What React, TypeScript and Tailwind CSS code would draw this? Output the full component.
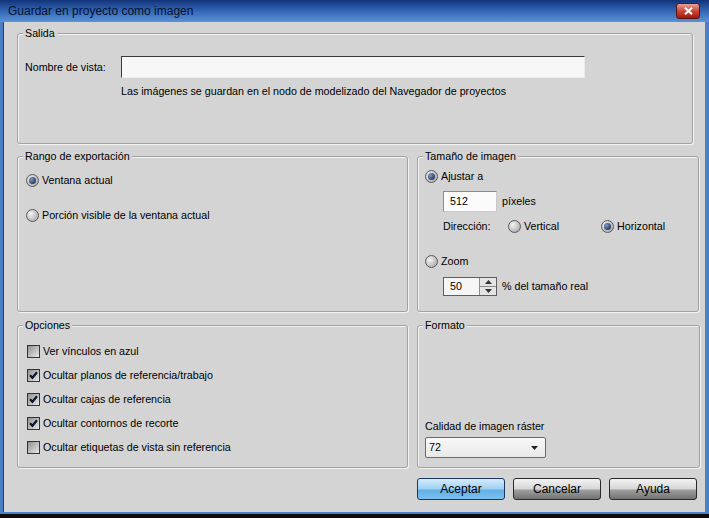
import React from 'react';

// Radio button in the old Windows classic/Vista-basic look
const Radio = ({ checked }: { checked?: boolean }) => (
  <span className="flex h-[13px] w-[13px] shrink-0 items-center justify-center rounded-full border border-[#5a5a5a] bg-[radial-gradient(circle_at_35%_35%,#f4f4f4,#9c9c9c)]">
    {checked && (
      <span className="h-[7px] w-[7px] rounded-full bg-[radial-gradient(circle_at_35%_35%,#7f98cc,#0a1738)]" />
    )}
  </span>
);

const Check = ({ checked }: { checked?: boolean }) => (
  <span className="flex h-[13px] w-[13px] shrink-0 items-center justify-center border border-[#343434] bg-[linear-gradient(135deg,#8f8f8f,#e9e9e9)]">
    {checked && (
      <svg width="9" height="9" viewBox="0 0 9 9">
        <path d="M1 4.2 L3.4 6.8 L8 1.2" stroke="#0b1530" strokeWidth="2.2" fill="none" />
      </svg>
    )}
  </span>
);

const Group = ({ title, className, children }: { title: string; className: string; children?: React.ReactNode }) => (
  <div
    className={`relative shrink-0 rounded-[3px] border border-[#a2a2a2] shadow-[inset_1px_1px_0_#f3f3f3,1px_1px_0_#f3f3f3] ${className}`}
  >
    <span className="absolute -top-[8px] left-[5px] bg-[#d4d4d4] px-[2px] leading-[14px]">{title}</span>
    {children}
  </div>
);

const Button = ({ label, primary }: { label: string; primary?: boolean }) => (
  <button
    className={`flex h-[22px] w-[88px] items-center justify-center rounded-[3px] border text-[12px] ${
      primary
        ? 'border-[#1b355f] bg-[linear-gradient(#d4ecfc,#9fd0f3_50%,#62aee6_55%,#7cc0ee)]'
        : 'border-[#2a2a2a] bg-[linear-gradient(#f3f3f3,#d6d6d6_50%,#9f9f9f_55%,#727272)]'
    }`}
  >
    {label}
  </button>
);

export default function App() {
  return (
    <div className="h-[518px] w-[709px] overflow-hidden bg-[#0c0c0c] font-['Liberation_Sans',Arial,sans-serif] text-[10.7px] leading-[13px] text-black">
      <div className="flex h-[514px] flex-col bg-[#4a7fc6]">
        {/* title bar */}
        <div className="flex h-[22px] shrink-0 items-center justify-between bg-[linear-gradient(#12337a,#2f62b0_45%,#5a93d8)] pl-[8px] pr-[9px]">
          <span className="text-[12px] leading-[16px] text-[#06122e]">Guardar en proyecto como imagen</span>
          <span className="flex h-[16px] w-[24px] items-center justify-center rounded-[3px] border border-[#5a1410] bg-[linear-gradient(#e7a194,#c9473a_50%,#a3180f)]">
            <svg width="9" height="8" viewBox="0 0 9 8">
              <path d="M1 0.8 L8 7.2 M8 0.8 L1 7.2" stroke="#fff" strokeWidth="2" />
            </svg>
          </span>
        </div>

        {/* frame */}
        <div className="flex flex-1 flex-col pb-[2px] pl-[3px] pr-[4px]">
          <div className="flex flex-1 flex-col border-l border-[#1d3d75] bg-[#d4d4d4] pl-[13px] pt-[11px]">
            <Group title="Salida" className="h-[111px] w-[676px] pl-[7px] pt-[22px]">
              <div className="flex items-center">
                <span className="w-[96px]">Nombre de vista:</span>
                <div className="h-[22px] w-[464px] border border-b-[#ececec] border-l-[#3a3a3a] border-r-[#ececec] border-t-[#3a3a3a] bg-[#f7f7f7]" />
              </div>
              <div className="ml-[96px] mt-[7px]">
                Las imágenes se guardan en el nodo de modelizado del Navegador de proyectos
              </div>
            </Group>

            <div className="mt-[12px] flex gap-[9px]">
              <Group title="Rango de exportación" className="h-[156px] w-[391px] pl-[8px] pt-[17px]">
                <div className="flex flex-col gap-[22px]">
                  <label className="flex items-center gap-[3px]">
                    <Radio checked />
                    <span>Ventana actual</span>
                  </label>
                  <label className="flex items-center gap-[3px]">
                    <Radio />
                    <span>Porción visible de la ventana actual</span>
                  </label>
                </div>
              </Group>

              <Group title="Tamaño de imagen" className="h-[156px] w-[282px] pl-[7px] pt-[13px]">
                <label className="flex items-center gap-[3px]">
                  <Radio checked />
                  <span>Ajustar a</span>
                </label>
                <div className="ml-[18px] mt-[8px] flex items-center gap-[5px]">
                  <div className="flex h-[21px] w-[54px] items-center border border-[#c9c9c9] border-l-[#8a8a8a] border-t-[#8a8a8a] bg-[#fbfbfb] pl-[6px]">
                    512
                  </div>
                  <span>píxeles</span>
                </div>
                <div className="ml-[18px] mt-[8px] flex items-center">
                  <span className="w-[65px]">Dirección:</span>
                  <label className="flex w-[93px] items-center gap-[3px]">
                    <Radio />
                    <span>Vertical</span>
                  </label>
                  <label className="flex items-center gap-[3px]">
                    <Radio checked />
                    <span>Horizontal</span>
                  </label>
                </div>
                <label className="mt-[22px] flex items-center gap-[3px]">
                  <Radio />
                  <span>Zoom</span>
                </label>
                <div className="ml-[18px] mt-[9px] flex items-center gap-[5px]">
                  <div className="flex h-[19px] w-[54px] border border-[#5e5e5e] bg-[#f6f6f6]">
                    <span className="flex flex-1 items-center pl-[6px]">50</span>
                    <div className="flex w-[17px] flex-col border-l border-[#8a8a8a] bg-[#e4e4e4]">
                      <span className="flex flex-1 items-center justify-center border-b border-[#8a8a8a]">
                        <svg width="7" height="4" viewBox="0 0 7 4">
                          <path d="M0 4 L3.5 0 L7 4 Z" fill="#333" />
                        </svg>
                      </span>
                      <span className="flex flex-1 items-center justify-center">
                        <svg width="7" height="4" viewBox="0 0 7 4">
                          <path d="M0 0 L3.5 4 L7 0 Z" fill="#333" />
                        </svg>
                      </span>
                    </div>
                  </div>
                  <span>% del tamaño real</span>
                </div>
              </Group>
            </div>

            <div className="mt-[13px] flex gap-[9px]">
              <Group title="Opciones" className="h-[143px] w-[391px] pl-[9px] pt-[19px]">
                <div className="flex flex-col gap-[11px]">
                  {[
                    ['Ver vínculos en azul', false],
                    ['Ocultar planos de referencia/trabajo', true],
                    ['Ocultar cajas de referencia', true],
                    ['Ocultar contornos de recorte', true],
                    ['Ocultar etiquetas de vista sin referencia', false],
                  ].map(([text, on]) => (
                    <label key={text as string} className="flex items-center gap-[3px]">
                      <Check checked={on as boolean} />
                      <span>{text as string}</span>
                    </label>
                  ))}
                </div>
              </Group>

              <Group title="Formato" className="flex h-[143px] w-[283px] flex-col justify-end pb-[9px] pl-[7px]">
                <span className="mb-[4px]">Calidad de imagen ráster</span>
                <div className="flex h-[21px] w-[121px] items-center justify-between rounded-[2px] border border-[#6a6a6a] bg-[linear-gradient(#f7f7f7,#e9e9e9)] pl-[3px] pr-[7px]">
                  <span>72</span>
                  <svg width="7" height="4" viewBox="0 0 7 4">
                    <path d="M0 0 L3.5 4 L7 0 Z" fill="#222" />
                  </svg>
                </div>
              </Group>
            </div>

            <div className="mt-[10px] flex gap-[8px] pl-[400px]">
              <Button label="Aceptar" primary />
              <Button label="Cancelar" />
              <Button label="Ayuda" />
            </div>
          </div>
        </div>
      </div>
    </div>
  );
}
